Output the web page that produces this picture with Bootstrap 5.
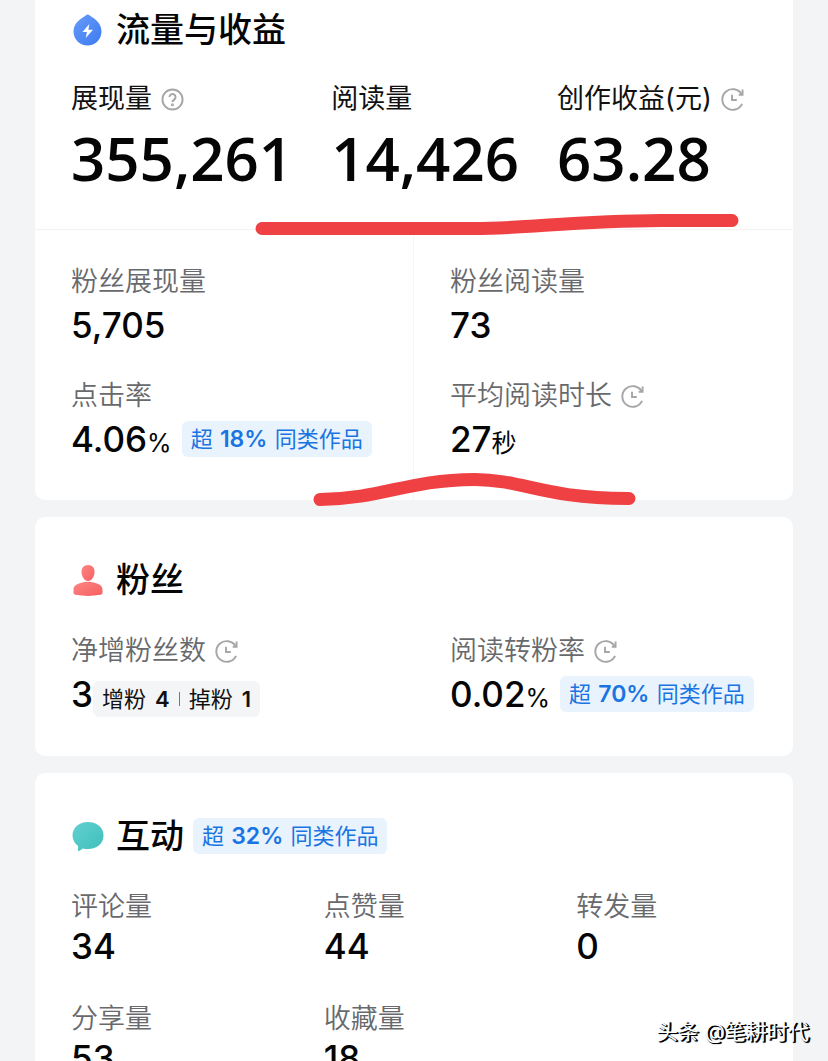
<!DOCTYPE html>
<html lang="zh-CN">
<head>
<meta charset="utf-8">
<meta name="viewport" content="width=device-width, initial-scale=1">
<title>流量与收益</title>
<link href="https://cdn.jsdelivr.net/npm/bootstrap@5.3.0/dist/css/bootstrap.min.css" rel="stylesheet">
<style>
  body { background: #f3f4f6; color: #050505; font-family: Inter, "Noto Sans CJK SC", sans-serif; }
  .screen { height: 100vh; padding: 0 35px; gap: 17px; }
  .panel { background: #fff; border-radius: 10px; }
  .panel-first { border-radius: 0 0 10px 10px; }
  .panel-inner { padding: 43px 36px 37px; }
  .panel-title { font-size: 34px; line-height: 40px; font-weight: 500; margin: 0; }
  .title-row { gap: 12px; margin-bottom: 33px; }
  .panel-first .title-row { padding: 10px 36px 0; margin-bottom: 31px; }
  .title-row .pill { margin-left: -3px; }
  .title-icon { width: 33px; height: 34px; flex: none; }
  .caption { font-size: 27px; line-height: 36px; font-weight: 350; color: #68696c; white-space: nowrap; gap: 9px; }
  .caption-dark { color: #111; font-weight: 400; }
  .hint { width: 23px; height: 23px; flex: none; color: #a5a6a8; }
  .total { font-family: "Open Sans", sans-serif; font-size: 60px; line-height: 72px; font-weight: 600; margin-top: 5px; }
  .totals { gap: 38px; padding: 0 36px 35px; }
  .figure-row { height: 50px; gap: 10px; white-space: nowrap; }
  .figure-num { font-size: 35px; line-height: 50px; font-weight: 500; }
  .unit { font-size: 25px; line-height: 1; font-weight: 400; }
  .pill { font-size: 22px; line-height: 36px; padding: 0 9px; border-radius: 6px; background: #e8f3fe; color: #1a74e2; white-space: nowrap; }
  .pill b { font-size: 23px; font-weight: 600; margin: 0 1px; line-height: 1; }
  .pill-grey { background: #f4f5f7; color: #111; margin-top: 10px; }
  .pill-grey b { font-size: 22px; margin: 0 0 0 9px; }
  .split { border-top: 1px solid #f3f3f4; }
  .split > div { padding: 34px 36px 36px; }
  .split > div:first-child { border-right: 1px solid #f6f6f7; }
  .stack { display: grid; gap: 28px; }
  .duo, .trio { display: grid; column-gap: 72px; }
  .duo { grid-template-columns: repeat(2, minmax(0, 1fr)); }
  .trio { grid-template-columns: repeat(3, minmax(0, 1fr)); row-gap: 34px; }
  .trio .figure-num { line-height: 42px; }
  .tick { width: 1px; height: 14px; background: #777; margin: 0 9px; }
  .marker { pointer-events: none; overflow: visible; }
  .watermark { right: 19px; bottom: 13px; font-size: 21px; line-height: 32px; color: #fff; text-shadow: 1px 1px 0 #000, 2px 1px 0 #000, 1px 1px 1px #000; }
</style>
</head>
<body>
<svg class="d-none" aria-hidden="true">
  <symbol id="clock" viewBox="0 0 24 24">
    <g fill="none" stroke="currentColor" stroke-width="2">
      <path d="M22 16.500A10.800 10.800 0 1 1 21.500 6.500"/><path d="M22.500 1.500V7H18.500"/><path d="M11.500 7v5.500h5"/>
    </g>
  </symbol>
</svg>
<main class="screen d-flex flex-column position-relative overflow-hidden">
  <section class="panel panel-first position-relative z-1 flex-shrink-0">
    <div class="title-row d-flex align-items-center">
      <svg class="title-icon" viewBox="0 0 32 34" overflow="visible" aria-hidden="true">
        <defs><linearGradient id="blue" x2="1" y2="1"><stop stop-color="#669bf8"/><stop offset="1" stop-color="#3d7bf0"/></linearGradient></defs>
        <path d="M14.500 2.200Q16 .8 18 2.200C22 5.500 30 9 30 18.500a14 14 0 0 1-28 0C2 9 10.500 5.500 14.500 2.200z" fill="url(#blue)"/>
        <path d="M17.800 11 11 19h4.500l-1.300 6 7.300-8.200h-4.600z" fill="#fff"/>
      </svg>
      <h2 class="panel-title">流量与收益</h2>
    </div>
    <div class="totals d-flex">
      <div><div class="caption caption-dark d-flex align-items-center">展现量
        <svg class="hint" viewBox="0 0 24 24" fill="none" stroke="currentColor" stroke-width="2" role="img" aria-label="说明"><circle cx="12" cy="12" r="10.500"/><path d="M8.800 9.500a3.200 3.200 0 1 1 5 2.600c-1.300 .9-1.800 1.300-1.800 2.600"/><circle cx="12" cy="17.500" r=".6"/></svg></div>
        <div class="total">355,261</div></div>
      <div><div class="caption caption-dark">阅读量</div><div class="total">14,426</div></div>
      <div><div class="caption caption-dark d-flex align-items-center">创作收益(元)<svg class="hint"><use href="#clock"/></svg></div>
        <div class="total">63.28</div></div>
    </div>
    <div class="split row g-0">
      <div class="col-6 stack">
        <div><div class="caption">粉丝展现量</div><div class="figure-row d-flex"><span class="figure-num">5,705</span></div></div>
        <div><div class="caption">点击率</div><div class="figure-row d-flex align-items-center"><span class="figure-num">4.06<span class="unit">%</span></span><span class="pill">超 <b>18%</b> 同类作品</span></div></div>
      </div>
      <div class="col-6 stack">
        <div><div class="caption">粉丝阅读量</div><div class="figure-row d-flex"><span class="figure-num">73</span></div></div>
        <div><div class="caption d-flex align-items-center">平均阅读时长<svg class="hint"><use href="#clock"/></svg></div><div class="figure-row d-flex"><span class="figure-num">27<span class="unit">秒</span></span></div></div>
      </div>
    </div>
    <svg class="marker position-absolute top-0 start-0 w-100" viewBox="0 0 758 510" fill="none" stroke="#ef4143" stroke-width="13" stroke-linecap="round" aria-hidden="true">
      <path d="M227 228.500H440C490 228.500 540 221 626 220.500H697"/>
      <path d="M285 499.500C350 498.500 370 480 440 479.500C490 480 505 498 594 498.500"/>
    </svg>
  </section>

  <section class="panel panel-inner flex-shrink-0">
    <div class="title-row d-flex align-items-center">
      <svg class="title-icon" viewBox="0 0 32 34" aria-hidden="true">
        <defs><linearGradient id="red" x2="1" y2="1"><stop stop-color="#fb8785"/><stop offset="1" stop-color="#f85e60"/></linearGradient></defs>
        <path d="M16.500 2c4.300 0 6.700 3 6.500 7.300C22.700 14 20.200 18 16.500 18s-6.200-4-6.500-8.700C9.800 5 12.200 2 16.500 2z" fill="url(#red)"/>
        <path d="M2 27c0-4 2.500-5.500 5.500-6.500 5.500-2.200 12.500-2.200 18 0 3 1 5.500 2.500 5.500 6.500v2.500c0 1.500-.8 2-2 2.300-8.500 1.500-16.500 1.500-25 0-1.200-.3-2-.8-2-2.300z" fill="url(#red)"/>
      </svg>
      <h2 class="panel-title">粉丝</h2>
    </div>
    <div class="duo">
      <div><div class="caption d-flex align-items-center">净增粉丝数<svg class="hint"><use href="#clock"/></svg></div>
        <div class="figure-row d-flex align-items-center gap-0"><span class="figure-num">3</span><span class="pill pill-grey d-flex align-items-center">增粉 <b>4</b><span class="tick"></span>掉粉 <b>1</b></span></div></div>
      <div><div class="caption d-flex align-items-center">阅读转粉率<svg class="hint"><use href="#clock"/></svg></div>
        <div class="figure-row d-flex align-items-center"><span class="figure-num">0.02<span class="unit">%</span></span><span class="pill">超 <b>70%</b> 同类作品</span></div></div>
    </div>
  </section>

  <section class="panel panel-inner flex-shrink-0">
    <div class="title-row d-flex align-items-center">
      <svg class="title-icon" viewBox="0 0 32 34" aria-hidden="true">
        <defs><linearGradient id="teal" x2="1" y2="1"><stop stop-color="#62d0cf"/><stop offset="1" stop-color="#3fbfbd"/></linearGradient></defs>
        <path d="M16.500 3C25.500 3 32 8.500 32 16.500S25.500 30 16.500 30c-2 0-3.500-.2-5-.6L7.500 32c-.7 .4-1.200 0-1.100-.8L6.600 27C3.300 24.500 1 21 1 16.500 1 8.500 7.500 3 16.500 3z" fill="url(#teal)"/>
      </svg>
      <h2 class="panel-title">互动</h2>
      <span class="pill">超 <b>32%</b> 同类作品</span>
    </div>
    <div class="trio">
      <div><div class="caption">评论量</div><div class="figure-num">34</div></div>
      <div><div class="caption">点赞量</div><div class="figure-num">44</div></div>
      <div><div class="caption">转发量</div><div class="figure-num">0</div></div>
      <div><div class="caption">分享量</div><div class="figure-num">53</div></div>
      <div><div class="caption">收藏量</div><div class="figure-num">18</div></div>
    </div>
  </section>
  <div class="watermark position-absolute z-2">头条 @笔耕时代</div>
</main>
<script src="https://cdn.jsdelivr.net/npm/bootstrap@5.3.0/dist/js/bootstrap.bundle.min.js"></script>
</body>
</html>
